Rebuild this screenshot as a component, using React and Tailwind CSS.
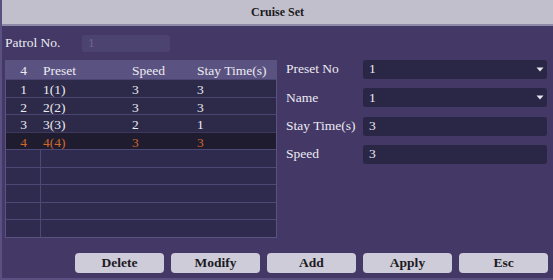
import React from "react"

const presets = [
  { no: "1", name: "1(1)", speed: "3", stay: "3" },
  { no: "2", name: "2(2)", speed: "3", stay: "3" },
  { no: "3", name: "3(3)", speed: "2", stay: "1" },
  { no: "4", name: "4(4)", speed: "3", stay: "3", active: true },
]

const fields = [
  { label: "Preset No", value: "1", select: true },
  { label: "Name", value: "1", select: true },
  { label: "Stay Time(s)", value: "3" },
  { label: "Speed", value: "3" },
]

const buttons = ["Delete", "Modify", "Add", "Apply", "Esc"]

const Arrow = () => (
  <svg width="8" height="5" viewBox="0 0 8 5" className="mr-[3px]">
    <path d="M0.5 0.5 L7.5 0.5 L4 4.5 Z" fill="#e8e6f0" />
  </svg>
)

const App = () => {
  return (
    <div className="w-[553px] h-[280px] bg-[#433866] flex flex-col border-l-2 border-b-2 border-[#5a5182] text-[13.5px] text-[#ecebf2] overflow-hidden font-['Liberation_Serif',serif]">
      <div className="h-[26px] shrink-0 bg-[#c1bfcb] border-b-2 border-[#8e89a6] flex items-center justify-center text-[#1b1a22] font-bold text-[12px]">
        Cruise Set
      </div>

      <div className="flex items-center mt-[9px] ml-[3px] h-[17px]">
        <span className="w-[77px]">Patrol No.</span>
        <div className="w-[88px] h-[17px] bg-[#4c4371] rounded-[2px] flex items-center pl-[6px] text-[#6d668e]">1</div>
      </div>

      <div className="flex mt-[8px] ml-[3px]">
        <div className="w-[272px] h-[178px] border border-[#5b537f] bg-[#302c4f] flex flex-col">
          <div className="grid grid-cols-[35px_89px_65px_1fr] h-[18px] items-center bg-[#5a5280] shrink-0">
            <span className="text-center">4</span>
            <span className="pl-[2px]">Preset</span>
            <span className="pl-[2px]">Speed</span>
            <span className="pl-[2px]">Stay Time(s)</span>
          </div>
          {presets.map((p) => (
            <div
              key={p.no}
              className={
                p.active
                  ? "grid grid-cols-[35px_89px_65px_1fr] h-[17.5px] items-center bg-[#1f1c2f] text-[#d0682c] border-t border-[#3d385c]"
                  : "grid grid-cols-[35px_89px_65px_1fr] h-[17.5px] items-center bg-[#2c2949] border-t border-[#4a4470]"
              }
            >
              <span className="text-center">{p.no}</span>
              <span className="pl-[2px]">{p.name}</span>
              <span className="pl-[2px]">{p.speed}</span>
              <span className="pl-[2px]">{p.stay}</span>
            </div>
          ))}
          {[0, 1, 2, 3, 4].map((i) => (
            <div key={i} className="grid grid-cols-[35px_1fr] h-[17.5px] border-t border-[#4e4874] bg-[#2f2b4e]">
              <span className="border-r border-[#4e4874]"></span>
              <span></span>
            </div>
          ))}
        </div>

        <div className="ml-[9px] flex flex-col gap-[9.3px]">
          {fields.map((f) => (
            <div key={f.label} className="flex items-center h-[19px]">
              <span className="w-[77px] whitespace-nowrap">{f.label}</span>
              <div className="w-[184px] h-[19px] bg-[#2a2645] rounded-[3px] flex items-center justify-between pl-[6px]">
                <span>{f.value}</span>
                {f.select && <Arrow />}
              </div>
            </div>
          ))}
        </div>
      </div>

      <div className="flex justify-end gap-[7px] pr-[5px] mt-[15px]">
        {buttons.map((b) => (
          <button
            key={b}
            className="w-[89px] h-[20px] bg-[#cfccd9] rounded-[4px] text-[#1b1a22] font-bold text-[13.5px] flex items-center justify-center"
          >
            {b}
          </button>
        ))}
      </div>
    </div>
  )
}

export default App
